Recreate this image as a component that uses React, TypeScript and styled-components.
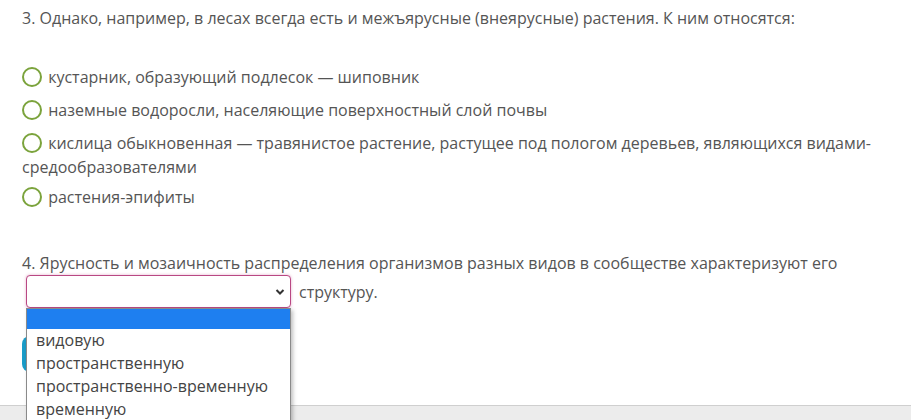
import React from 'react';
import styled, { createGlobalStyle } from 'styled-components';

const GlobalStyle = createGlobalStyle`
  html, body {
    margin: 0;
    padding: 0;
    background: #fff;
  }
  body {
    font-family: 'Open Sans', 'Noto Sans', sans-serif;
    font-size: 16px;
    color: #555;
    overflow: hidden;
  }
`;

const Page = styled.div`
  position: relative;
  width: 911px;
  height: 420px;
  overflow: hidden;
`;

const Content = styled.div`
  padding: 6px 0 0 22px;
`;

const Question = styled.div<{ $gap?: number }>`
  line-height: 24px;
  margin-top: ${(p) => p.$gap ?? 0}px;
`;

const Options = styled.div`
  margin-top: 35px;
`;

const Option = styled.div<{ $after: number }>`
  line-height: 24px;
  margin-bottom: ${(p) => p.$after}px;
  padding-right: 36px;
`;

const Radio = styled.span`
  display: inline-block;
  box-sizing: border-box;
  width: 20px;
  height: 20px;
  border: 2.5px solid #7ba33c;
  border-radius: 50%;
  vertical-align: -4px;
  margin-right: 2px;
`;

const SelectRow = styled.div`
  display: flex;
  align-items: center;
  line-height: 24px;
`;

const SelectBox = styled.div`
  box-sizing: border-box;
  width: 265px;
  height: 33px;
  margin-left: 4px;
  border: 1px solid #b94883;
  border-radius: 4px;
  box-shadow: 0 0 3px rgba(200, 70, 140, 0.45);
  background: #fff;
  display: flex;
  align-items: center;
  justify-content: flex-end;
  padding-right: 5px;
`;

const SelectTail = styled.span`
  margin-left: 8px;
`;

const CheckButton = styled.button`
  display: block;
  margin-top: 28px;
  width: 140px;
  height: 36px;
  border: none;
  border-radius: 8px;
  background: #1a9cc8;
`;

const Footer = styled.div`
  margin-top: 33px;
  height: 40px;
  background: #ececec;
  border-top: 1px solid #cfcfcf;
`;

const DropList = styled.ul`
  position: absolute;
  top: 308px;
  left: 26px;
  width: 265px;
  box-sizing: border-box;
  margin: 0;
  padding: 0;
  list-style: none;
  background: #fff;
  border: 1px solid #8a8a8a;
  box-shadow: 2px 2px 4px rgba(0, 0, 0, 0.25);
  color: #444;
`;

const DropItem = styled.li<{ $active?: boolean }>`
  height: ${(p) => (p.$active ? 20 : 23)}px;
  line-height: 23px;
  padding-left: 9px;
  background: ${(p) => (p.$active ? '#1e7ff0' : 'transparent')};
  white-space: nowrap;
`;

const Chevron = () => (
  <svg width="10" height="8" viewBox="0 0 10 8">
    <path d="M1.5 2 L5 5.5 L8.5 2" fill="none" stroke="#333" strokeWidth="2" />
  </svg>
);

const options = [
  { text: 'кустарник, образующий подлесок — шиповник', after: 9 },
  { text: 'наземные водоросли, населяющие поверхностный слой почвы', after: 9 },
  {
    text: 'кислица обыкновенная — травянистое растение, растущее под пологом деревьев, являющихся видами-средообразователями',
    after: 6,
  },
  { text: 'растения-эпифиты', after: 9 },
];

const choices = ['видовую', 'пространственную', 'пространственно-временную', 'временную'];

const App: React.FC = () => {
  return (
    <Page>
      <GlobalStyle />
      <Content>
        <Question>
          3. Однако, например, в лесах всегда есть и межъярусные (внеярусные) растения. К ним относятся:
        </Question>
        <Options>
          {options.map((o) => (
            <Option key={o.text} $after={o.after}>
              <Radio /> {o.text}
            </Option>
          ))}
        </Options>
        <Question $gap={42}>
          4. Ярусность и мозаичность распределения организмов разных видов в сообществе характеризуют его
        </Question>
        <SelectRow>
          <SelectBox>
            <Chevron />
          </SelectBox>
          <SelectTail>структуру.</SelectTail>
        </SelectRow>
        <CheckButton aria-label="Проверить" />
      </Content>
      <Footer />
      <DropList>
        <DropItem $active />
        {choices.map((c) => (
          <DropItem key={c}>{c}</DropItem>
        ))}
      </DropList>
    </Page>
  );
};

export default App;
